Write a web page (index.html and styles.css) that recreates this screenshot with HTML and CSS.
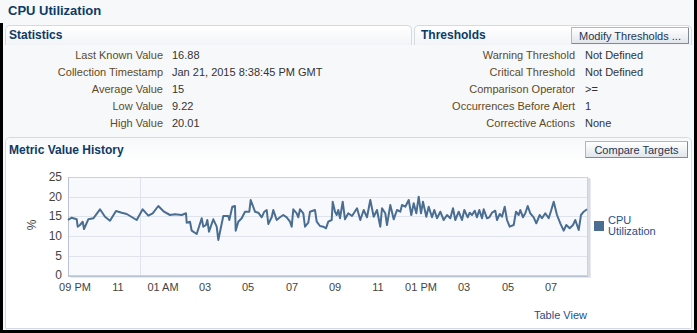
FILE: index.html
```html
<!DOCTYPE html>
<html>
<head>
<meta charset="utf-8">
<link rel="stylesheet" href="styles.css">
</head>
<body>
<div class="page">
  <div class="title">CPU Utilization</div>
  <div class="content">
    <div class="top-row">
      <section class="panel stats">
        <div class="panel-head"><span class="head-text">Statistics</span></div>
        <div class="fields stats-fields">
          <div class="lbl">Last Known Value</div><div class="val">16.88</div>
          <div class="lbl">Collection Timestamp</div><div class="val">Jan 21, 2015 8:38:45 PM GMT</div>
          <div class="lbl">Average Value</div><div class="val">15</div>
          <div class="lbl">Low Value</div><div class="val">9.22</div>
          <div class="lbl">High Value</div><div class="val">20.01</div>
        </div>
      </section>
      <section class="panel thr">
        <div class="panel-head"><span class="head-text">Thresholds</span><button class="btn btn-modify">Modify Thresholds ...</button></div>
        <div class="fields thr-fields">
          <div class="lbl">Warning Threshold</div><div class="val">Not Defined</div>
          <div class="lbl">Critical Threshold</div><div class="val">Not Defined</div>
          <div class="lbl">Comparison Operator</div><div class="val">&gt;=</div>
          <div class="lbl">Occurrences Before Alert</div><div class="val">1</div>
          <div class="lbl">Corrective Actions</div><div class="val">None</div>
        </div>
      </section>
    </div>
    <section class="metric">
      <div class="metric-head"><span class="head-text">Metric Value History</span><button class="btn btn-compare">Compare Targets</button></div>
      <div class="chart-row">
        <svg class="chart" width="584" height="125" viewBox="10 170 584 125" xmlns="http://www.w3.org/2000/svg">
          <rect x="71" y="179" width="520" height="99" fill="#e6e9ee"/>
          <rect x="70" y="178" width="520" height="99" fill="#d9dde3"/>
          <rect x="68.5" y="177.5" width="519" height="98" fill="#f8f9fd" stroke="#c9d2de"/>
          <g stroke="#dfe4ec" stroke-width="1">
            <line x1="69" y1="197.5" x2="587" y2="197.5"/>
            <line x1="69" y1="216.5" x2="587" y2="216.5"/>
            <line x1="69" y1="236.5" x2="587" y2="236.5"/>
            <line x1="69" y1="256.5" x2="587" y2="256.5"/>
            <line x1="140.5" y1="178" x2="140.5" y2="275"/>
          </g>
          <line x1="68.5" y1="177" x2="68.5" y2="277" stroke="#b8c4d4"/>
          <line x1="68" y1="276.5" x2="588" y2="276.5" stroke="#b8c4d4"/>
          <g class="ytick" text-anchor="end">
            <text x="62" y="181">25</text>
            <text x="62" y="201">20</text>
            <text x="62" y="220">15</text>
            <text x="62" y="240">10</text>
            <text x="62" y="260">5</text>
            <text x="62" y="279">0</text>
          </g>
          <text class="ytick" x="0" y="0" text-anchor="middle" transform="translate(36 225) rotate(-90)">%</text>
          <g class="xtick" text-anchor="middle">
            <text x="75" y="291">09 PM</text>
            <text x="118" y="291">11</text>
            <text x="163" y="291">01 AM</text>
            <text x="205" y="291">03</text>
            <text x="248" y="291">05</text>
            <text x="292" y="291">07</text>
            <text x="335" y="291">09</text>
            <text x="378" y="291">11</text>
            <text x="421" y="291">01 PM</text>
            <text x="464" y="291">03</text>
            <text x="508" y="291">05</text>
            <text x="551" y="291">07</text>
          </g>
          <polyline fill="none" stroke="#4a6e92" stroke-width="2" stroke-linejoin="round" points="68,220 71.7,217.7 76.7,219.3 77.7,226.7 80,225 82.7,221.7 84,229 88.3,219.3 93.3,218.3 100,209.3 105,216.7 110,220.7 116,211 121.7,212.7 126.7,214 136.7,220 142.7,209.3 148.3,215.7 152.7,213.3 158.3,206 164,211.7 170,215 175,214.3 181.7,215 186,213.3 186.7,222.7 190,221.7 191.7,230.7 196.7,234 201.7,218.3 203.3,226.7 206,225 207.3,220 209,231.7 213.3,219.3 216.7,226.7 218.3,240 223.3,216 228.3,216 229.3,220 232.3,206.7 235,206 235.7,230.7 238.3,221.7 241.7,218.3 245,211.7 249.3,211.7 250.7,200 255,211.7 258.3,212.7 261.7,217.3 264.3,211.7 266.7,210 268.3,224 271.7,217.3 273.3,210 276.7,220 280,217.3 283.3,215 286.7,217.3 290,221.7 291.7,226.7 293.3,209.3 296.7,213.3 298.3,217.3 300,209.3 303.3,213.3 305,226.7 308.3,222.7 310,211.7 315,210 316.7,221.7 320,226 323.3,226.7 326,228.3 328.3,221.7 331.7,220 332.7,201.7 335,211.7 336.7,215 338.3,210 340,218.3 342.7,201.7 345,219.3 348.3,213.3 352,216 357,208.3 360.3,220 363.7,210 367,217.3 370.3,200 373.7,216.7 377,210 380.3,226.7 382,208.3 385.3,213.3 387,225 390.3,205 393.7,219.3 397,210 400.3,211.7 402,205 405.3,206.7 408.7,200 411.3,215 413.7,203.3 416.3,213.3 418.7,196.7 421,213.3 423,201.7 426.3,216.7 428.7,206.7 432,217.3 434.3,210 437,218.3 440.3,211.7 443.7,220 447,215 450.3,218.3 453,208.3 455.3,220 458.7,211.7 462,220 464.3,210 467.7,217.3 469.7,212.7 472,215 474.7,210.7 477,217.3 479.3,210 482,218.3 483.7,209.3 487,218.3 489.3,217.3 492,212.7 495.3,210.7 497,220 499.7,214 502,216.7 504.7,206.7 507,220 509.7,226.7 513.7,225 516,211.7 518.7,215 520.3,210 523,217.3 525.3,213.3 527.7,206 530.3,213.3 533.7,217.3 536.3,223.3 539.7,215 542,218.3 545.3,213.3 548.7,218.3 551,211 553.7,201.7 557,215 560.3,223.3 563.7,230.7 566.3,225 569.7,228.3 573,225 575.3,220 578.7,230 581,215 583.7,211.7 587,209.3"/>
        </svg>
        <div class="legend">
          <span class="swatch"></span>
          <span class="legend-text">CPU<br>Utilization</span>
        </div>
      </div>
      <div class="table-view"><a class="link">Table View</a></div>
    </section>
  </div>
</div>
</body>
</html>
```
FILE: styles.css
```css
html, body {
  margin: 0;
  padding: 0;
}
body {
  width: 697px;
  height: 333px;
  overflow: hidden;
  font-family: "Liberation Sans", Arial, sans-serif;
  font-size: 11px;
}
.page {
  width: 697px;
  height: 333px;
  box-sizing: border-box;
  border-right: 3px solid #000;
  border-bottom: 3px solid #000;
  background: #f7f8fa;
  display: flex;
  flex-direction: column;
}
.title {
  height: 23px;
  line-height: 21px;
  padding-left: 8px;
  font-weight: bold;
  font-size: 13px;
  color: #0d3a66;
  flex: none;
}
.content {
  flex: 1;
  border-left: 3px solid #000;
  display: flex;
  flex-direction: column;
  padding: 2px 2px 1px 2px;
  gap: 0;
}
.top-row {
  display: flex;
  gap: 2px;
  height: 111px;
  flex: none;
}
.panel {
  display: flex;
  flex-direction: column;
}
.stats {
  width: 407px;
}
.thr {
  flex: 1;
}
.panel-head {
  height: 19px;
  display: flex;
  align-items: flex-start;
  border: 1px solid #d4dae1;
  border-bottom: none;
  border-radius: 5px 5px 0 0;
  background: linear-gradient(#ffffff, #f2f4f7);
}
.head-text {
  font-weight: bold;
  font-size: 12px;
  color: #0d3a66;
  line-height: 19px;
  padding-left: 3px;
}
.thr .head-text {
  padding-left: 6px;
}
.btn {
  margin: 0;
  padding: 0;
  height: 17px;
  box-sizing: border-box;
  font-family: "Liberation Sans", Arial, sans-serif;
  font-size: 11px;
  line-height: 14px;
  color: #1e3550;
  background: linear-gradient(#ffffff, #e1e6ec);
  border: 1px solid #aeb7c3;
  border-right-color: #7f8a98;
  border-bottom-color: #7f8a98;
  border-radius: 1px;
  text-align: center;
}
.btn-modify {
  width: 118px;
  margin-left: auto;
  margin-right: 2px;
  margin-top: 1px;
}
.fields {
  display: grid;
  grid-auto-rows: 17px;
  line-height: 17px;
  padding-top: 2px;
}
.stats-fields {
  grid-template-columns: 158px auto;
  column-gap: 9px;
}
.thr-fields {
  grid-template-columns: 161px auto;
  column-gap: 10px;
}
.lbl {
  text-align: right;
  color: #5e4b1f;
  white-space: nowrap;
}
.val {
  color: #333333;
  white-space: nowrap;
}
.metric {
  flex: 1;
  display: flex;
  flex-direction: column;
  background: #ffffff;
  border: 1px solid #d4dae1;
  border-radius: 5px 5px 0 0;
  margin-top: 1px;
  margin-right: 0;
}
.metric-head {
  height: 24px;
  display: flex;
  align-items: flex-start;
  background: linear-gradient(#f6f8fa, #ffffff);
  border-radius: 5px 5px 0 0;
  flex: none;
}
.metric-head .head-text {
  line-height: 24px;
}
.btn-compare {
  width: 103px;
  margin-left: auto;
  margin-right: 3px;
  margin-top: 3px;
}
.chart-row {
  display: flex;
  margin-top: 8px;
  margin-left: 4px;
  flex: none;
}
.chart {
  display: block;
  flex: none;
}
.ytick {
  font-family: "Liberation Sans", Arial, sans-serif;
  font-size: 12px;
  fill: #444444;
}
.xtick {
  font-family: "Liberation Sans", Arial, sans-serif;
  font-size: 11px;
  fill: #444444;
}
.legend {
  margin-top: 45px;
  display: flex;
  align-items: center;
  gap: 4px;
  height: 22px;
}
.swatch {
  width: 10px;
  height: 10px;
  background: #4a6e92;
  flex: none;
}
.legend-text {
  font-size: 11px;
  line-height: 11px;
  color: #1d4f8c;
}
.table-view {
  margin-top: 13px;
  margin-right: 104px;
  text-align: right;
  line-height: 14px;
}
.link {
  color: #1f4e8c;
  font-size: 11px;
}
```
